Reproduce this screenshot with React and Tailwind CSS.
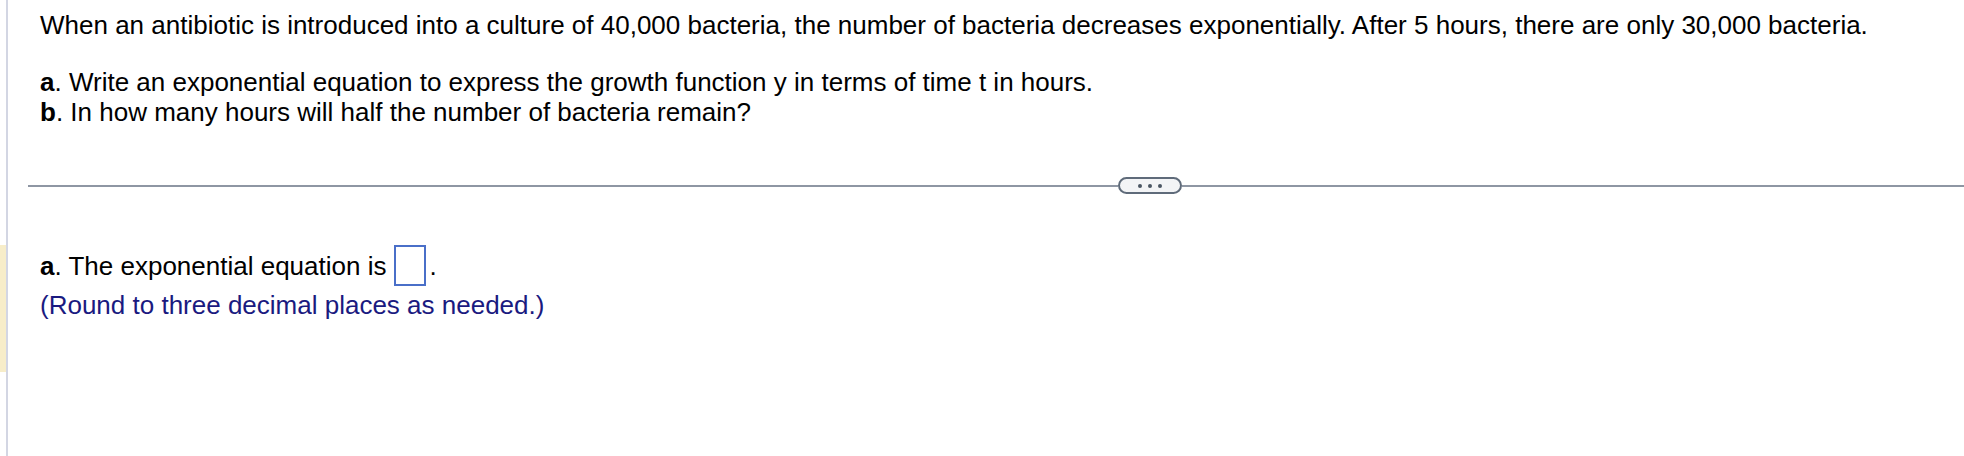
import React from 'react';

function Divider() {
  return (
    <div className="mt-[50px] ml-[20px] flex h-[17px] items-center">
      <div className="h-[2px] w-[1090px] bg-[#8e96a3]" />
      <div className="flex h-[17px] w-[64px] items-center justify-center gap-[6px] rounded-full border-2 border-[#5f6b7a] bg-[#f3f4f6]">
        <span className="h-[4px] w-[4px] rounded-full bg-[#4b5563]" />
        <span className="h-[4px] w-[4px] rounded-full bg-[#4b5563]" />
        <span className="h-[4px] w-[4px] rounded-full bg-[#4b5563]" />
      </div>
      <div className="h-[2px] flex-1 bg-[#8e96a3]" />
    </div>
  );
}

export default function App() {
  return (
    <div className="flex h-[456px] w-[1964px] overflow-hidden bg-white font-['Liberation_Sans',Arial,sans-serif] text-[26px] text-black">
      <div className="flex w-[6px] flex-col">
        <div className="h-[245px]" />
        <div className="h-[127px] bg-[#f7edc9]" />
      </div>
      <div className="w-[2px] bg-[#d3d6e3]" />

      <div className="flex flex-1 flex-col">
        <div className="pl-[32px] pt-[10px] leading-[30px]">
          <p>
            When an antibiotic is introduced into a culture of 40,000 bacteria, the number of bacteria
            decreases exponentially. After 5 hours, there are only 30,000 bacteria.
          </p>
          <p className="mt-[27px]">
            <b>a</b>. Write an exponential equation to express the growth function y in terms of time t in hours.
          </p>
          <p>
            <b>b</b>. In how many hours will half the number of bacteria remain?
          </p>
        </div>

        <Divider />

        <div className="mt-[51px] pl-[32px] leading-[30px]">
          <div className="flex h-[41px] items-center">
            <span>
              <b>a</b>. The exponential equation is
            </span>
            <span className="ml-[8px] h-[41px] w-[32px] border-2 border-[#4a6fc8]" />
            <span className="ml-[3px]">.</span>
          </div>
          <p className="mt-[4px] text-[#1a1a80]">(Round to three decimal places as needed.)</p>
        </div>
      </div>
    </div>
  );
}
